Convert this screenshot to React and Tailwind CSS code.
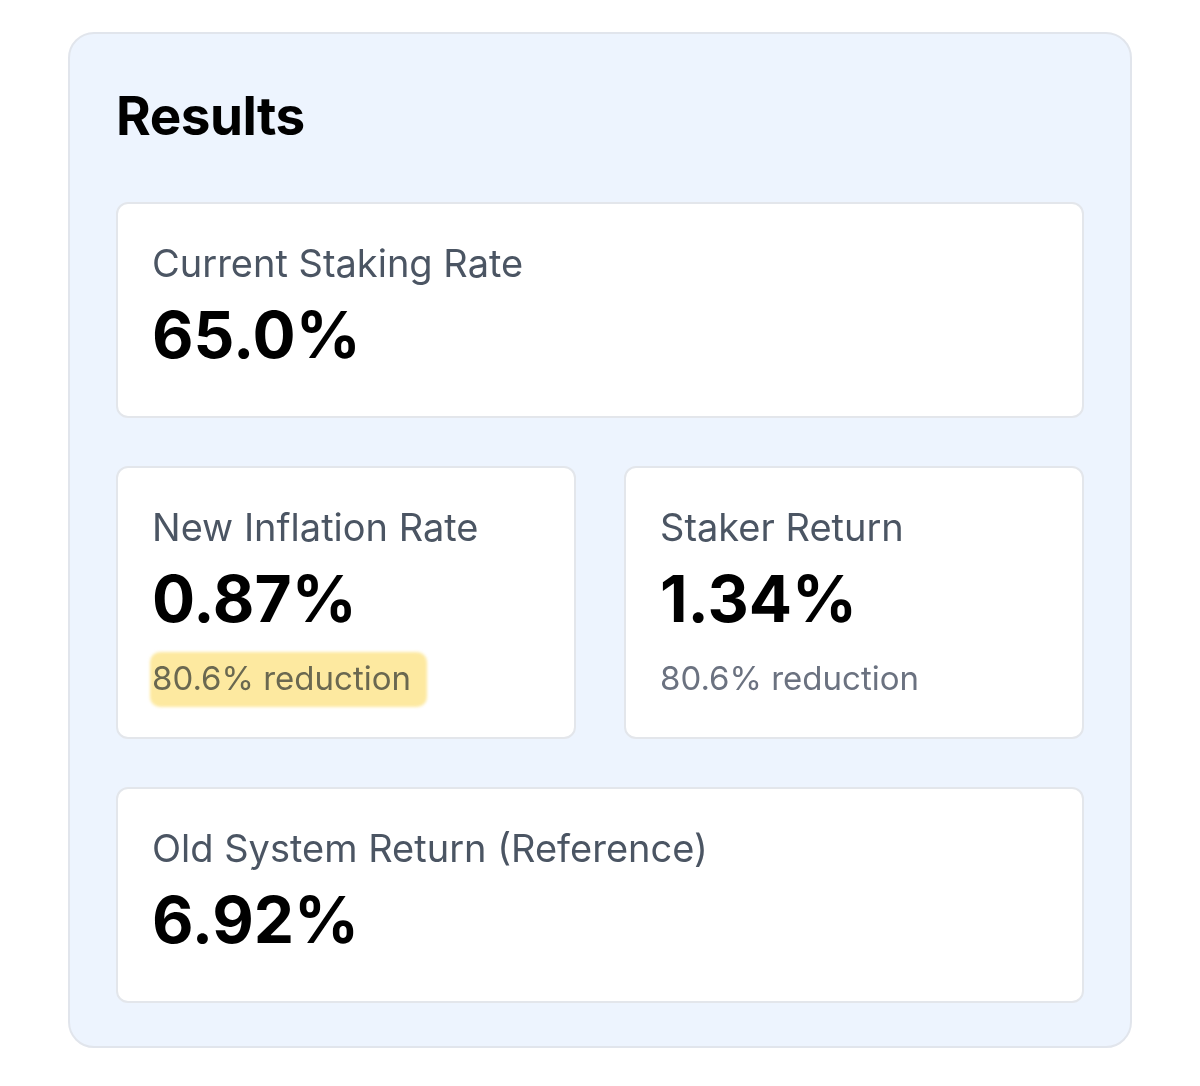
import React from "react";

function StatCard({ label, value, sub, highlight, className = "" }) {
  return (
    <div
      className={
        "rounded-[12px] border-2 border-[#e3e6eb] bg-white px-[34px] pt-9 " +
        (sub ? "pb-[39px] " : "pb-[43px] ") +
        className
      }
    >
      <p className="text-[38px] leading-[46px] text-[#4b5563]">{label}</p>
      <p className="mt-[11px] text-[64px] font-bold leading-[76px] text-black">{value}</p>
      {sub && (
        <p className="mt-[21px] text-[33px] leading-[40px] text-[#6b7280]">
          <span className="relative inline-block">
            {sub}
            {/* marker highlight */}
            {highlight && (
              <span className="pointer-events-none absolute -left-[2px] -right-[16px] top-[-6px] bottom-[-9px] rounded-[10px] bg-[#fde9a0] mix-blend-multiply blur-[1.5px]" />
            )}
          </span>
        </p>
      )}
    </div>
  );
}

export default function App() {
  return (
    <div className="min-h-[1086px] w-full bg-white pt-[32px] font-['Inter','Noto_Sans',sans-serif]">
      <div className="mx-[68px] rounded-[26px] border-2 border-[#e1e5ec] bg-[#edf4fe] px-[46px] pt-[50px] pb-[43px]">
        {/* header */}
        <h2 className="mb-[54px] text-[53px] font-bold leading-[64px] tracking-[-0.5px] text-black">
          Results
        </h2>

        <div className="flex flex-col gap-12">
          <StatCard label="Current Staking Rate" value="65.0%" />

          <div className="grid grid-cols-2 gap-12">
            <StatCard
              label="New Inflation Rate"
              value="0.87%"
              sub="80.6% reduction"
              highlight
            />
            <StatCard label="Staker Return" value="1.34%" sub="80.6% reduction" />
          </div>

          <StatCard label="Old System Return (Reference)" value="6.92%" />
        </div>
      </div>
    </div>
  );
}
